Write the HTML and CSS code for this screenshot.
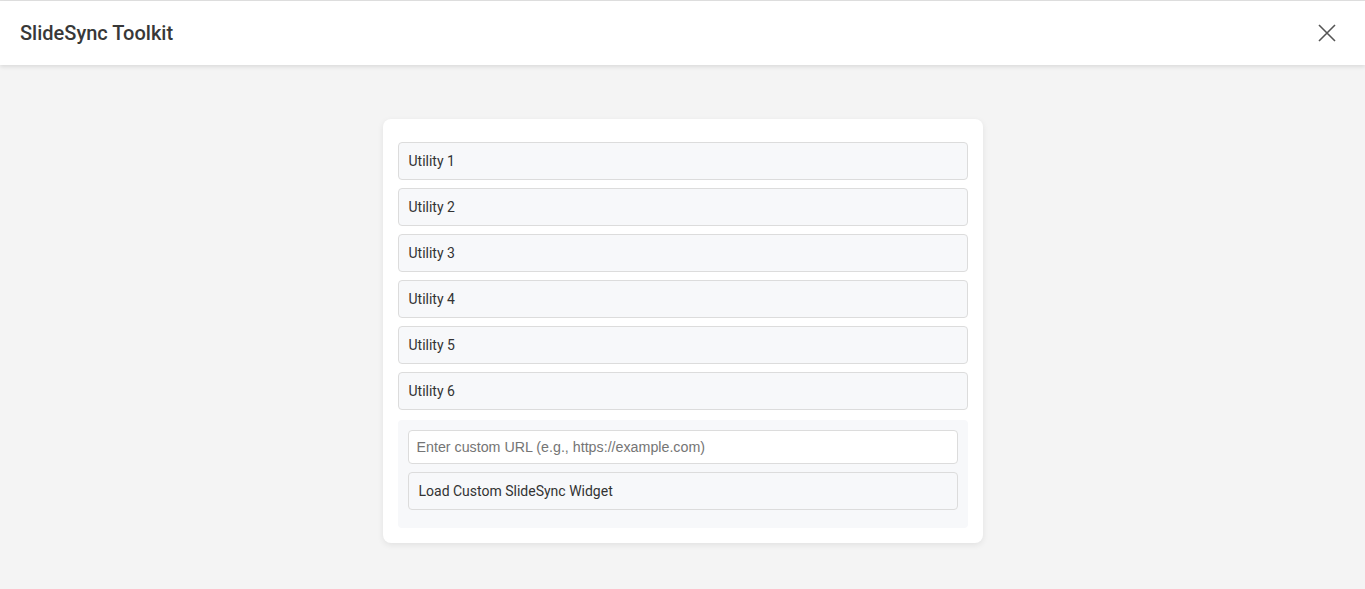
FILE: index.html
```html
<!DOCTYPE html>
<html lang="en">
<head>
<meta charset="utf-8">
<title>SlideSync Toolkit</title>
<link rel="stylesheet" href="styles.css">
</head>
<body>
<div class="app">
  <header class="topbar">
    <h1 class="title">SlideSync Toolkit</h1>
    <button class="close" aria-label="Close">
      <svg width="18" height="18" viewBox="0 0 18 18"><path d="M1 1L17 17M17 1L1 17" stroke="#555" stroke-width="1.6" fill="none"/></svg>
    </button>
  </header>
  <main class="main">
    <section class="card">
      <div class="list">
        <button class="item">Utility 1</button>
        <button class="item">Utility 2</button>
        <button class="item">Utility 3</button>
        <button class="item">Utility 4</button>
        <button class="item">Utility 5</button>
        <button class="item">Utility 6</button>
      </div>
      <div class="custom">
        <input class="url" type="text" placeholder="Enter custom URL (e.g., https://example.com)">
        <button class="item">Load Custom SlideSync Widget</button>
      </div>
    </section>
  </main>
</div>
</body>
</html>
```
FILE: styles.css
```css
html, body {
  margin: 0;
  padding: 0;
  height: 100%;
}
body {
  background: #f4f4f4;
  font-family: Roboto, "Liberation Sans", Arial, sans-serif;
  color: #333;
}
.app {
  border-top: 1px solid #e0e0e0;
  min-height: 100%;
  box-sizing: border-box;
}
.topbar {
  height: 64px;
  background: #fff;
  display: flex;
  align-items: center;
  justify-content: space-between;
  padding: 0 20px;
  box-shadow: 0 2px 4px rgba(0,0,0,0.1);
  position: relative;
}
.title {
  margin: 0;
  font-size: 20px;
  font-weight: 500;
  color: #383838;
}
.close {
  background: none;
  border: 0;
  padding: 0;
  margin-right: 9px;
  width: 18px;
  height: 18px;
  display: flex;
  cursor: pointer;
}
.main {
  display: flex;
  justify-content: center;
  padding-top: 54px;
}
.card {
  width: 600px;
  box-sizing: border-box;
  background: #fff;
  border-radius: 8px;
  padding: 23px 15px 15px;
  box-shadow: 0 2px 6px rgba(0,0,0,0.08);
}
.list {
  display: flex;
  flex-direction: column;
  gap: 8px;
}
.item {
  display: block;
  width: 100%;
  height: 38px;
  box-sizing: border-box;
  text-align: left;
  padding: 0 10px;
  background: #f7f8fa;
  border: 1px solid #dcdcdc;
  border-radius: 4px;
  font-family: Roboto, "Liberation Sans", Arial, sans-serif;
  font-size: 14px;
  color: #333;
}
.custom {
  margin-top: 10px;
  background: #f7f8fa;
  border-radius: 4px;
  padding: 10px 10px 18px;
  display: flex;
  flex-direction: column;
  gap: 8px;
}
.url {
  height: 34px;
  box-sizing: border-box;
  border: 1px solid #dcdcdc;
  border-radius: 4px;
  background: #fff;
  padding: 0 8px;
  font-family: "Liberation Sans", Arial, sans-serif;
  font-size: 14.25px;
  color: #333;
}
.url::placeholder {
  color: #757575;
}
```
